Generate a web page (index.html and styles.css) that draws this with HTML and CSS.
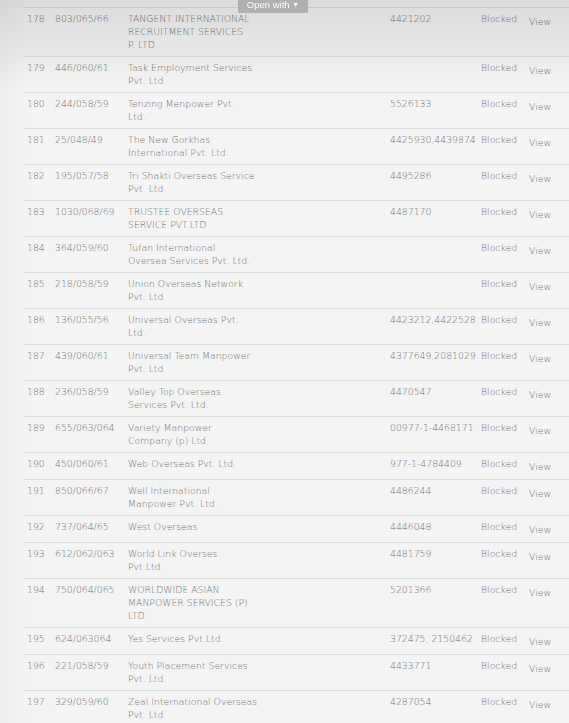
FILE: index.html
```html
<!DOCTYPE html>
<html>
<head>
<meta charset="utf-8">
<link rel="stylesheet" href="styles.css">
</head>
<body>
<div class="shade"></div>
<div class="openwith">Open with <span class="caret">&#9660;</span></div>
<table class="list">
<colgroup>
<col class="c-no"><col class="c-reg"><col class="c-name"><col class="c-phone"><col class="c-status"><col class="c-view">
</colgroup>
<tbody>
<tr><td>178</td><td>803/065/66</td><td>TANGENT INTERNATIONAL<br>RECRUITMENT SERVICES<br>P. LTD.</td><td>4421202</td><td>Blocked</td><td class="view">View</td></tr>
<tr><td>179</td><td>446/060/61</td><td>Task Employment Services<br>Pvt. Ltd.</td><td></td><td>Blocked</td><td class="view">View</td></tr>
<tr><td>180</td><td>244/058/59</td><td>Tenzing Menpower Pvt.<br>Ltd.</td><td>5526133</td><td>Blocked</td><td class="view">View</td></tr>
<tr><td>181</td><td>25/048/49</td><td>The New Gorkhas<br>International Pvt. Ltd.</td><td>4425930,4439874</td><td>Blocked</td><td class="view">View</td></tr>
<tr><td>182</td><td>195/057/58</td><td>Tri Shakti Overseas Service<br>Pvt. Ltd.</td><td>4495286</td><td>Blocked</td><td class="view">View</td></tr>
<tr><td>183</td><td>1030/068/69</td><td>TRUSTEE OVERSEAS<br>SERVICE PVT.LTD</td><td>4487170</td><td>Blocked</td><td class="view">View</td></tr>
<tr><td>184</td><td>364/059/60</td><td>Tufan International<br>Oversea Services Pvt. Ltd.</td><td></td><td>Blocked</td><td class="view">View</td></tr>
<tr><td>185</td><td>218/058/59</td><td>Union Overseas Network<br>Pvt. Ltd.</td><td></td><td>Blocked</td><td class="view">View</td></tr>
<tr><td>186</td><td>136/055/56</td><td>Universal Overseas Pvt.<br>Ltd.</td><td>4423212,4422528</td><td>Blocked</td><td class="view">View</td></tr>
<tr><td>187</td><td>439/060/61</td><td>Universal Team Manpower<br>Pvt. Ltd.</td><td>4377649,2081029</td><td>Blocked</td><td class="view">View</td></tr>
<tr><td>188</td><td>236/058/59</td><td>Valley Top Overseas<br>Services Pvt. Ltd.</td><td>4470547</td><td>Blocked</td><td class="view">View</td></tr>
<tr><td>189</td><td>655/063/064</td><td>Variety Manpower<br>Company (p) Ltd</td><td>00977-1-4468171</td><td>Blocked</td><td class="view">View</td></tr>
<tr><td>190</td><td>450/060/61</td><td>Web Overseas Pvt. Ltd.</td><td>977-1-4784409</td><td>Blocked</td><td class="view">View</td></tr>
<tr><td>191</td><td>850/066/67</td><td>Well International<br>Manpower Pvt. Ltd.</td><td>4486244</td><td>Blocked</td><td class="view">View</td></tr>
<tr><td>192</td><td>737/064/65</td><td>West Overseas</td><td>4446048</td><td>Blocked</td><td class="view">View</td></tr>
<tr><td>193</td><td>612/062/063</td><td>World Link Overses<br>Pvt.Ltd.</td><td>4481759</td><td>Blocked</td><td class="view">View</td></tr>
<tr><td>194</td><td>750/064/065</td><td>WORLDWIDE ASIAN<br>MANPOWER SERVICES (P)<br>LTD.</td><td>5201366</td><td>Blocked</td><td class="view">View</td></tr>
<tr><td>195</td><td>624/063064</td><td>Yes Services Pvt.Ltd.</td><td>372475, 2150462</td><td>Blocked</td><td class="view">View</td></tr>
<tr><td>196</td><td>221/058/59</td><td>Youth Placement Services<br>Pvt. Ltd.</td><td>4433771</td><td>Blocked</td><td class="view">View</td></tr>
<tr><td>197</td><td>329/059/60</td><td>Zeal International Overseas<br>Pvt. Ltd.</td><td>4287054</td><td>Blocked</td><td class="view">View</td></tr>
</tbody>
</table>
</body>
</html>
```
FILE: styles.css
```css
html, body {
  margin: 0;
  padding: 0;
}
body {
  background: #f4f4f4;
  font-family: "DejaVu Sans", sans-serif;
  font-weight: 200;
  font-size: 9.3px;
  color: #6f6f6f;
  overflow: hidden;
}
.shade {
  position: fixed;
  left: 0;
  top: 0;
  right: 0;
  height: 90px;
  background: linear-gradient(to bottom, rgba(0,0,0,0.1), rgba(0,0,0,0));
  pointer-events: none;
}
.shade::after {
  content: "";
  position: fixed;
  left: 0;
  top: 0;
  bottom: 0;
  width: 30px;
  background: linear-gradient(to right, rgba(0,0,0,0.025), rgba(0,0,0,0));
}
.openwith {
  position: fixed;
  top: 0;
  left: 238px;
  width: 70px;
  height: 13px;
  background: #b0b0b0;
  color: #fff;
  font-family: "Liberation Sans", sans-serif;
  font-weight: 400;
  font-size: 9.5px;
  line-height: 9px;
  text-align: center;
  box-sizing: border-box;
}
.caret {
  font-size: 7px;
  vertical-align: 1px;
}
.list {
  margin: 7px 0 0 23px;
  width: 546px;
  border-collapse: collapse;
  table-layout: fixed;
  border-top: 1px solid #dcdcdc;
}
.c-no { width: 28px; }
.c-reg { width: 73px; }
.c-name { width: 262px; }
.c-phone { width: 91px; }
.c-status { width: 48px; }
.c-view { width: 44px; }
.list td {
  border-bottom: 1px solid #dcdcdc;
  padding: 4px 4px 5px;
  line-height: 13px;
  vertical-align: top;
  white-space: nowrap;
}
.list td.view {
  padding-top: 7px;
  padding-bottom: 6px;
}
```
